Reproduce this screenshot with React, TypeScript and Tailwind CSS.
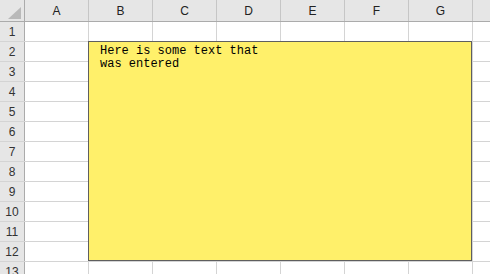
import React from 'react';

const columns = ['A', 'B', 'C', 'D', 'E', 'F', 'G', ''];
const rows = Array.from({ length: 13 }, (_, i) => i + 1);

export default function App() {
  return (
    <div className="relative w-[490px] h-[274px] overflow-hidden bg-white font-['Liberation_Sans',sans-serif]">
      {/* column headers */}
      <div className="flex h-[22px] bg-[#e6e6e6] border-b border-[#ababab]">
        <div className="relative w-[25px] shrink-0 border-r border-[#ababab]">
          <svg className="absolute left-[8px] top-[7px]" width="13" height="12" viewBox="0 0 13 12">
            <polygon points="13,0 13,12 0,12" fill="#b9b9b9" />
          </svg>
        </div>
        {columns.map((c, i) => (
          <div
            key={i}
            className="w-[64px] shrink-0 border-r border-[#c6c6c6] flex items-center justify-center text-[12px] text-[#222]"
          >
            {c}
          </div>
        ))}
      </div>

      {/* rows */}
      {rows.map((r) => (
        <div key={r} className="flex h-[20px] border-b border-[#d4d4d4]">
          <div className="w-[25px] shrink-0 bg-[#e6e6e6] border-r border-[#ababab] flex items-center justify-center text-[12px] text-[#333] pt-[1px]">
            {r}
          </div>
          {columns.map((_, i) => (
            <div key={i} className="w-[64px] shrink-0 border-r border-[#d4d4d4]" />
          ))}
        </div>
      ))}

      {/* text box floating over cells */}
      <div className="absolute left-[88px] top-[41px] w-[384px] h-[220px] bg-[#fff06a] border border-[#5f5f5f] pl-[11px] pt-[3px]">
        <p className="font-['Liberation_Mono',monospace] text-[12px] leading-[13px] text-black">
          Here is some text that
          <br />
          was entered
        </p>
      </div>
    </div>
  );
}
